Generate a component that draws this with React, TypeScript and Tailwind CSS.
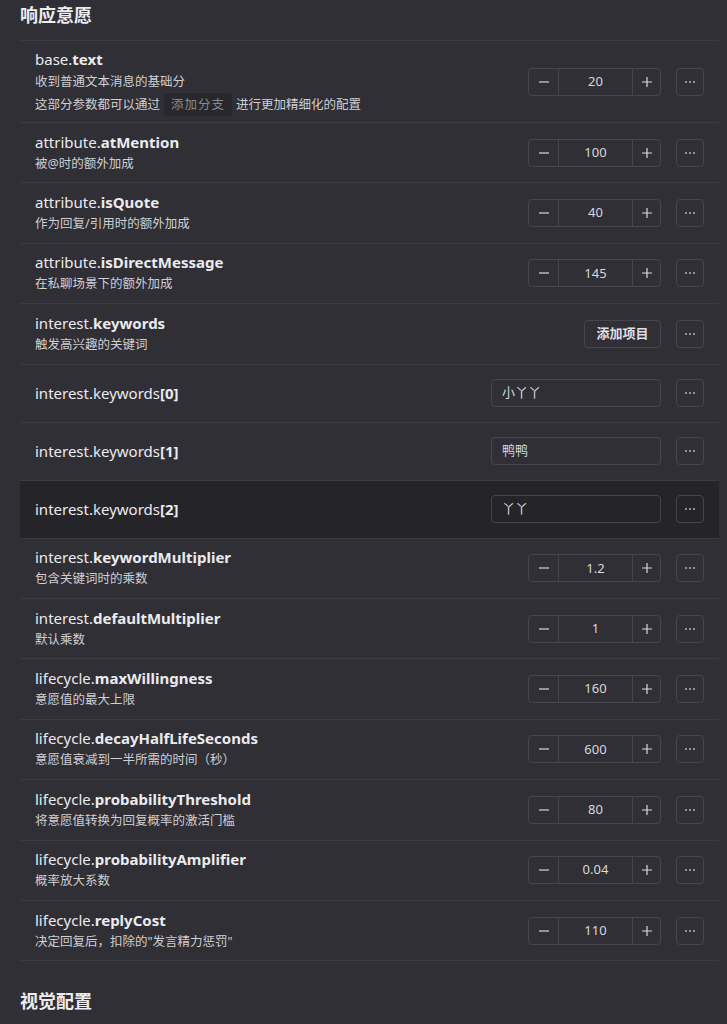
import React from 'react';

type Row =
  | { kind: 'number'; prefix: string; key: string; desc?: React.ReactNode; value: string }
  | { kind: 'list'; prefix: string; key: string; desc: string }
  | { kind: 'text'; prefix: string; key: string; value: string; active?: boolean };

const rows: Row[] = [
  {
    kind: 'number',
    prefix: 'base.',
    key: 'text',
    value: '20',
    desc: (
      <>
        <div>收到普通文本消息的基础分</div>
        <div className="mt-[1px] flex items-center">
          这部分参数都可以通过
          <span className="mx-[4px] rounded-[4px] bg-[#28272c] px-[7px] py-[1px] text-[#8a898d] tracking-[1px]">添加分支</span>
          进行更加精细化的配置
        </div>
      </>
    ),
  },
  { kind: 'number', prefix: 'attribute.', key: 'atMention', value: '100', desc: '被@时的额外加成' },
  { kind: 'number', prefix: 'attribute.', key: 'isQuote', value: '40', desc: '作为回复/引用时的额外加成' },
  { kind: 'number', prefix: 'attribute.', key: 'isDirectMessage', value: '145', desc: '在私聊场景下的额外加成' },
  { kind: 'list', prefix: 'interest.', key: 'keywords', desc: '触发高兴趣的关键词' },
  { kind: 'text', prefix: 'interest.keywords', key: '[0]', value: '小丫丫' },
  { kind: 'text', prefix: 'interest.keywords', key: '[1]', value: '鸭鸭' },
  { kind: 'text', prefix: 'interest.keywords', key: '[2]', value: '丫丫', active: true },
  { kind: 'number', prefix: 'interest.', key: 'keywordMultiplier', value: '1.2', desc: '包含关键词时的乘数' },
  { kind: 'number', prefix: 'interest.', key: 'defaultMultiplier', value: '1', desc: '默认乘数' },
  { kind: 'number', prefix: 'lifecycle.', key: 'maxWillingness', value: '160', desc: '意愿值的最大上限' },
  { kind: 'number', prefix: 'lifecycle.', key: 'decayHalfLifeSeconds', value: '600', desc: '意愿值衰减到一半所需的时间（秒）' },
  { kind: 'number', prefix: 'lifecycle.', key: 'probabilityThreshold', value: '80', desc: '将意愿值转换为回复概率的激活门槛' },
  { kind: 'number', prefix: 'lifecycle.', key: 'probabilityAmplifier', value: '0.04', desc: '概率放大系数' },
  { kind: 'number', prefix: 'lifecycle.', key: 'replyCost', value: '110', desc: '决定回复后，扣除的"发言精力惩罚"' },
];

const MoreButton = () => (
  <button className="flex h-[28px] w-[28px] items-center justify-center rounded-[4px] border border-[#46454b] text-[#b5b4b9]">
    <svg width="12" height="4" viewBox="0 0 12 4" fill="currentColor">
      <circle cx="2" cy="2" r="1" />
      <circle cx="6" cy="2" r="1" />
      <circle cx="10" cy="2" r="1" />
    </svg>
  </button>
);

const NumberInput = ({ value }: { value: string }) => (
  <div className="flex h-[28px] w-[133px] items-stretch rounded-[4px] border border-[#46454b] text-[#d8d7dc]">
    <button className="flex w-[30px] items-center justify-center border-r border-[#46454b]">
      <svg width="12" height="12" viewBox="0 0 12 12" stroke="currentColor" strokeWidth="1.2">
        <path d="M1 6h10" />
      </svg>
    </button>
    <div className="flex flex-1 items-center justify-center text-[13px]">{value}</div>
    <button className="flex w-[28px] items-center justify-center border-l border-[#46454b]">
      <svg width="12" height="12" viewBox="0 0 12 12" stroke="currentColor" strokeWidth="1.2">
        <path d="M1 6h10M6 1v10" />
      </svg>
    </button>
  </div>
);

export default function App() {
  return (
    <div
      className="min-h-screen bg-[#302f35] pl-[20px] pr-[8px] text-[#e6e5ea]"
      style={{ fontFamily: '"Noto Sans", "Noto Sans CJK SC", sans-serif' }}
    >
      <h2 className="pt-[1px] pb-[11px] text-[18px] font-bold leading-[28px] text-[#ececef]">响应意愿</h2>
      <div className="border-t border-[#3c3b41]">
        {rows.map((r, i) => (
          <div
            key={i}
            className={`flex items-center justify-between border-b border-[#3c3b41] pl-[15px] pr-[15px] ${
              r.kind === 'text' ? 'h-[58px]' : r.kind === 'number' && i === 0 ? 'h-[82px]' : 'h-[60.4px]'
            } ${r.kind === 'text' && r.active ? 'bg-[#252429]' : ''}`}
          >
            <div className="flex flex-col">
              <div className="text-[15px] leading-[22px] text-[#ebeaef]">
                {r.prefix}
                <span className="font-bold">{r.key}</span>
              </div>
              {'desc' in r && r.desc ? (
                <div className={`text-[12.5px] text-[#cfced3] ${i === 0 ? 'leading-[21px] pt-[1px]' : 'leading-[22px]'}`}>{r.desc}</div>
              ) : null}
            </div>
            <div className="flex items-center gap-[15px]">
              {r.kind === 'number' && <NumberInput value={r.value} />}
              {r.kind === 'list' && (
                <button className="flex h-[28px] w-[77px] items-center justify-center rounded-[4px] border border-[#46454b] text-[13px] font-bold text-[#e0dfe4]">
                  添加项目
                </button>
              )}
              {r.kind === 'text' && (
                <div className="flex h-[28px] w-[170px] items-center rounded-[4px] border border-[#46454b] px-[10px] text-[13px] text-[#d8d7dc]">
                  {r.value}
                </div>
              )}
              <MoreButton />
            </div>
          </div>
        ))}
      </div>
      <h2 className="pt-[26px] text-[18px] font-bold leading-[28px] text-[#ececef]">视觉配置</h2>
    </div>
  );
}
